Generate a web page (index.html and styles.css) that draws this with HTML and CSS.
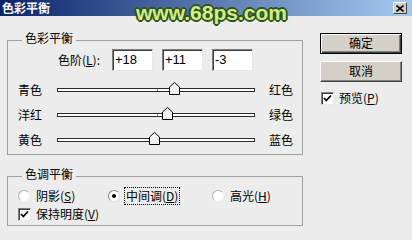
FILE: index.html
```html
<!DOCTYPE html>
<html lang="zh">
<head>
    <meta charset="UTF-8">
    <title>色彩平衡</title>
    <link rel="stylesheet" href="styles.css">
</head>
<body>
<div class="dialog">

    <!-- Title bar -->
    <div class="titlebar">
        <span class="title">色彩平衡</span>
        <span class="close"><svg width="8" height="7" viewBox="0 0 8 7"><path d="M0.5 0.5 L7.5 6.5 M7.5 0.5 L0.5 6.5" stroke="#000" stroke-width="1.6"/></svg></span>
    </div>
    <span class="watermark">www.68ps.com</span>

    <div class="content">
        <div class="main">

            <!-- Color balance -->
            <div class="group balance">
                <div class="caption">色彩平衡</div>
                <div class="levels">
                    <span class="levels-label">色阶(<u>L</u>):</span>
                    <span class="field">+18</span>
                    <span class="field">+11</span>
                    <span class="field">-3</span>
                </div>
                <div class="slider-row">
                    <span class="lbl">青色</span>
                    <div class="track"><span class="tick"></span><svg class="thumb" style="left:111px" width="11" height="13" viewBox="0 0 11 13"><path d="M5.5 0.5 L10.5 5 V12.5 H0.5 V5 Z" fill="#f2f2f2" stroke="#000"/></svg></div>
                    <span class="lbl right">红色</span>
                </div>
                <div class="slider-row">
                    <span class="lbl">洋红</span>
                    <div class="track"><span class="tick"></span><svg class="thumb" style="left:104px" width="11" height="13" viewBox="0 0 11 13"><path d="M5.5 0.5 L10.5 5 V12.5 H0.5 V5 Z" fill="#f2f2f2" stroke="#000"/></svg></div>
                    <span class="lbl right">绿色</span>
                </div>
                <div class="slider-row">
                    <span class="lbl">黄色</span>
                    <div class="track"><span class="tick"></span><svg class="thumb" style="left:91px" width="11" height="13" viewBox="0 0 11 13"><path d="M5.5 0.5 L10.5 5 V12.5 H0.5 V5 Z" fill="#f2f2f2" stroke="#000"/></svg></div>
                    <span class="lbl right">蓝色</span>
                </div>
            </div>

            <!-- Tone balance -->
            <div class="group tone">
                <div class="caption">色调平衡</div>
                <div class="radio-row">
                    <span class="opt first"><span class="radio"></span>阴影(<u>S</u>)</span>
                    <span class="opt second"><span class="radio on"></span><span class="focus">中间调(<u>D</u>)</span></span>
                    <span class="opt"><span class="radio"></span>高光(<u>H</u>)</span>
                </div>
                <div class="check-row">
                    <span class="check"><svg width="11" height="11" viewBox="0 0 11 11"><path d="M2 5 L4.3 7.5 L9 2.5" fill="none" stroke="#000" stroke-width="1.8"/></svg></span>保持明度(<u>V</u>)
                </div>
            </div>
        </div>

        <!-- Buttons -->
        <div class="side">
            <div class="btn default">确定</div>
            <div class="btn">取消</div>
            <div class="check-row preview">
                <span class="check"><svg width="11" height="11" viewBox="0 0 11 11"><path d="M2 5 L4.3 7.5 L9 2.5" fill="none" stroke="#000" stroke-width="1.8"/></svg></span>预览(<u>P</u>)
            </div>
        </div>
    </div>

</div>
</body>
</html>
```

FILE: styles.css
```css
* {
    box-sizing: border-box;
}
body {
    margin: 0;
    width: 412px;
    height: 240px;
    overflow: hidden;
    background: #ececec;
    font-family: "Noto Sans CJK SC", sans-serif;
    font-size: 12px;
    color: #000;
}
u {
    text-decoration: underline;
    text-underline-offset: 1px;
}
.dialog {
    position: relative;
    height: 240px;
}

/* Title bar */
.titlebar {
    height: 16px;
    background: linear-gradient(to right, #0a246a, #a6caf0);
    display: flex;
    align-items: center;
    justify-content: space-between;
    padding: 0 5px 0 2px;
}
.title {
    color: #fff;
    font-weight: bold;
    line-height: 14px;
}
.close {
    width: 14px;
    height: 12px;
    background: #d4d0c8;
    border: 1px solid;
    border-color: #fff #404040 #404040 #fff;
    display: flex;
    align-items: center;
    justify-content: center;
}
.watermark {
    position: absolute;
    left: 136px;
    top: 2px;
    font-family: "Liberation Sans", sans-serif;
    font-weight: bold;
    font-size: 21px;
    line-height: 21px;
    color: #d2ee84;
    text-shadow: 2px 0 0 #2c5420, -2px 0 0 #2c5420, 0 2px 0 #2c5420, 0 -2px 0 #2c5420,
                 1px 1px 0 #2c5420, -1px -1px 0 #2c5420, 1px -1px 0 #2c5420, -1px 1px 0 #2c5420;
}

/* Layout */
.content {
    display: flex;
    padding: 17px 0 0 7px;
}
.main {
    width: 296px;
}
.side {
    margin-left: 17px;
}

/* Group boxes */
.group {
    border: 1px solid #a0a0a0;
    padding: 0 0 2px 10px;
}
.balance {
    margin-top: 7px;
}
.tone {
    margin-top: 21px;
}
.caption {
    width: fit-content;
    margin: -10px 0 0 4px;
    padding: 0 3px;
    background: #ececec;
    line-height: 14px;
}

/* Levels */
.levels {
    display: flex;
    align-items: center;
    margin-top: 4px;
    margin-bottom: 6px;
    height: 22px;
}
.levels-label {
    width: 54px;
    margin-left: 40px;
    line-height: 14px;
}
.field {
    width: 41px;
    height: 22px;
    margin-right: 9px;
    background: #fff;
    border: 1px solid;
    border-color: #808080 #e8e8e8 #e8e8e8 #808080;
    box-shadow: inset 1px 1px 0 #404040;
    font-family: "Liberation Sans", sans-serif;
    font-size: 13px;
    line-height: 20px;
    padding-left: 2px;
}

/* Sliders */
.slider-row {
    display: flex;
    align-items: center;
    height: 25px;
}
.lbl {
    width: 39px;
    line-height: 14px;
}
.lbl.right {
    width: auto;
    margin-left: 14px;
}
.track {
    position: relative;
    width: 198px;
    height: 4px;
    background: #fff;
    border: 1px solid #2a2a2a;
}
.tick {
    position: absolute;
    left: 99px;
    top: 0;
    width: 1px;
    height: 2px;
    background: #999;
}
.thumb {
    position: absolute;
    top: -7px;
    display: block;
}

/* Radios and checks */
.radio-row {
    display: flex;
    align-items: center;
    height: 18px;
    margin-top: 6px;
}
.opt {
    display: flex;
    align-items: center;
    line-height: 14px;
}
.opt.first {
    width: 90px;
}
.opt.second {
    width: 104px;
}
.radio {
    width: 12px;
    height: 12px;
    border-radius: 50%;
    background: #fff;
    border: 1px solid;
    border-color: #b0b0b0 #f4f4f4 #f4f4f4 #b0b0b0;
    margin-right: 6px;
    display: flex;
    align-items: center;
    justify-content: center;
}
.radio.on {
    border-color: #808080 #e0e0e0 #e0e0e0 #808080;
    margin-right: 4px;
}
.radio.on::after {
    content: "";
    width: 4px;
    height: 4px;
    border-radius: 50%;
    background: #000;
}
.focus {
    border: 1px dotted #000;
    padding: 1px 1px;
}
.check-row {
    display: flex;
    align-items: center;
    height: 18px;
    line-height: 14px;
}
.check {
    width: 13px;
    height: 13px;
    background: #fff;
    border: 1px solid;
    border-color: #808080 #e8e8e8 #e8e8e8 #808080;
    box-shadow: inset 1px 1px 0 #404040;
    margin-right: 5px;
    display: flex;
    align-items: center;
    justify-content: center;
}

/* Buttons */
.btn {
    width: 82px;
    height: 21px;
    background: #d4d0c8;
    border: 1px solid;
    border-color: #fff #404040 #404040 #fff;
    box-shadow: inset -1px -1px 0 #808080;
    text-align: center;
    line-height: 18px;
    margin-bottom: 7px;
}
.btn.default {
    border-color: #000;
    box-shadow: inset 1px 1px 0 #fff, inset -1px -1px 0 #404040, inset -2px -2px 0 #808080;
}
.preview {
    margin-top: 6px;
    padding-left: 1px;
}
```
